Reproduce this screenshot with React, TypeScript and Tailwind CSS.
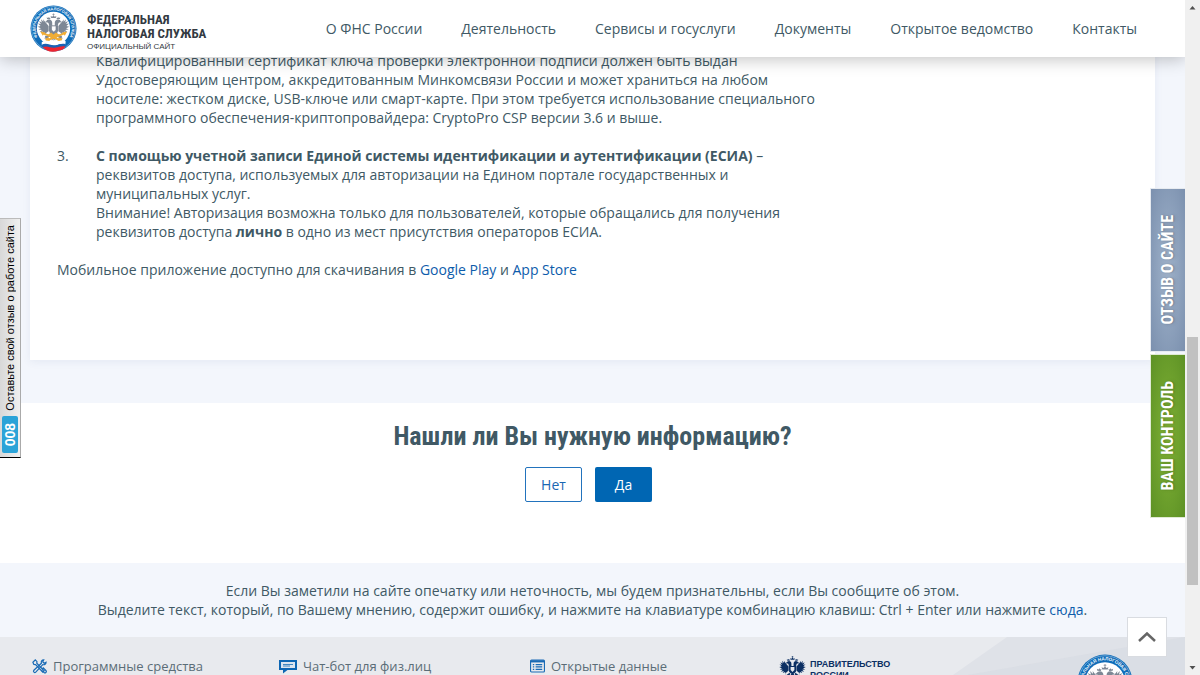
import { useId } from 'react';

const navItems = [
  'О ФНС России',
  'Деятельность',
  'Сервисы и госуслуги',
  'Документы',
  'Открытое ведомство',
  'Контакты',
];

const EagleShape = () => (
  <g>
    {/* crowns */}
    <path d="M50 8v7M46.500 11h7" stroke="currentColor" strokeWidth="2" />
    <path d="M43 22l-2-6 5 2 4-4 4 4 5-2-2 6z" />
    <path d="M30 25l-1-5 4 2 3-3 2 3 3-1-2 5zM70 25l1-5-4 2-3-3-2 3-3-1 2 5z" />
    {/* heads */}
    <path d="M46 46V37c0-7-5-11-11-10-4 0-6 3-7 5l-4 2 5 2c3 0 5 0 6 3l2 8z" />
    <path d="M54 46V37c0-7 5-11 11-10 4 0 6 3 7 5l4 2-5 2c-3 0-5 0-6 3l-2 8z" />
    {/* left wing */}
    <path d="M35 47L22 31l-4-5 1 8-8-8 3 10-9-5 6 10-9-2 8 8-9 2 10 5-8 4 11 1-7 7 11-2-4 7 9-4v7l6-7 6-4z" />
    {/* right wing */}
    <path d="M65 47l13-16 4-5-1 8 8-8-3 10 9-5-6 10 9-2-8 8 9 2-10 5 8 4-11 1 7 7-11-2 4 7-9-4v7l-6-7-6-4z" />
    {/* body, legs and tail */}
    <path d="M36 45h28v15c0 8-6 12-14 16-8-4-14-8-14-16z" />
    <path d="M39 70l-11 8-5-1 2 5-4 3 6 1 3 4 2-6 10-8zM61 70l11 8 5-1-2 5 4 3-6 1-3 4-2-6-10-8z" />
    <path d="M46 73l-7 15 5-2 1 6 4-5 1 7 1-7 4 5 1-6 5 2-7-15z" />
  </g>
);

const Emblem = ({ className }: { className: string }) => {
  const ring = useId();
  return (
    <svg viewBox="0 0 96 96" className={className} aria-hidden="true">
      <circle cx="48" cy="48" r="47" fill="#0f6cb8" />
      <circle cx="48" cy="48" r="45" fill="none" stroke="#a9cbe8" strokeWidth="1" />
      <circle cx="48" cy="48" r="34" fill="#fff" />
      <path id={ring} d="M25 77a37 37 0 1 1 46 0" fill="none" />
      <text fontFamily="Liberation Sans, sans-serif" fontSize="8" fontWeight="700" fill="#eef5fb">
        <textPath href={`#${ring}`} startOffset="50%" textAnchor="middle">
          ФЕДЕРАЛЬНАЯ НАЛОГОВАЯ СЛУЖБА
        </textPath>
      </text>
      <g transform="translate(15 12) scale(.66)" fill="#7e8895" color="#7e8895">
        <EagleShape />
      </g>
      <path d="M44 43h9v8l-4.500 4-4.500-4z" fill="#fff" stroke="#68727f" />
      <path d="M27 58l35 14M70 58L35 72" stroke="#f0ad35" strokeWidth="4" />
      <path
        d="M21 54l10 2-5 7zM76 54l-10 2 5 7zM38 60l5-4 5 4 5-4 6 4-5 7H43zM31 69l7-3 3 6-8 3zM66 69l-7-3-3 6 8 3z"
        fill="#f0ad35"
      />
      <path d="M24 76c10-9 19 2 29-1 7-2 13-4 20-1l-1 7c-7-3-14 0-20 2-10 2-17-6-28-1z" fill="#fff" />
      <path d="M24 81c11-5 18 3 28 1 7-1 13-5 21-2l-1 6c-7-2-14 1-20 2-10 2-17-5-27-1z" fill="#1b62b5" />
      <path d="M26 86c10-4 16 3 26 1 7-1 13-4 20-2-2 5-8 8-13 8-12 5-26 3-33-7z" fill="#ed2530" />
    </svg>
  );
};

const Header = () => (
  <header className="absolute inset-x-0 top-0 z-20 flex h-[57px] items-center justify-between bg-white pl-[30px] pr-12 shadow-[0_2px_16px_rgba(0,0,0,0.25)]">
    <a href="#" className="flex items-center gap-[10px]">
      <Emblem className="size-[47px]" />
      <span className="flex flex-col pt-2 font-['Roboto_Condensed','Liberation_Sans_Narrow','Roboto',sans-serif] text-[#333a42]">
        <span className="text-[13px] leading-[14px] font-bold">ФЕДЕРАЛЬНАЯ</span>
        <span className="text-[13px] leading-[14px] font-bold">НАЛОГОВАЯ СЛУЖБА</span>
        <span className="font-['Liberation_Sans',sans-serif] text-[8px] leading-3">ОФИЦИАЛЬНЫЙ САЙТ</span>
      </span>
    </a>
    <nav className="flex gap-[39px] whitespace-nowrap">
      {navItems.map((item) => (
        <a key={item} href="#" className="text-[14px] leading-5">
          {item}
        </a>
      ))}
    </nav>
  </header>
);

const Article = () => (
  <section className="px-[30px] pb-[43px]">
    <div className="bg-white px-[27px] pt-[51px] pb-[81px] shadow-[0_2px_8px_rgba(60,90,140,0.08)]">
      <ol className="leading-[19px]">
        <li className="flex pb-[19px]">
          <span className="w-[39px] shrink-0" />
          <p>
            Квалифицированный сертификат ключа проверки электронной подписи должен быть выдан
            <br />
            Удостоверяющим центром, аккредитованным Минкомсвязи России и может храниться на любом
            <br />
            носителе: жестком диске, USB-ключе или смарт-карте. При этом требуется использование специального
            <br />
            программного обеспечения-криптопровайдера: CryptoPro CSP версии 3.6 и выше.
          </p>
        </li>
        <li className="flex pb-[19px]">
          <span className="w-[39px] shrink-0">3.</span>
          <p>
            <b>С помощью учетной записи Единой системы идентификации и аутентификации (ЕСИА)</b> –
            <br />
            реквизитов доступа, используемых для авторизации на Едином портале государственных и
            <br />
            муниципальных услуг.
            <br />
            Внимание! Авторизация возможна только для пользователей, которые обращались для получения
            <br />
            реквизитов доступа <b>лично</b> в одно из мест присутствия операторов ЕСИА.
          </p>
        </li>
      </ol>
      <p className="leading-[19px]">
        Мобильное приложение доступно для скачивания в{' '}
        <a href="#" className="text-[#0d5cab]">Google Play</a> и{' '}
        <a href="#" className="text-[#0d5cab]">App Store</a>
      </p>
    </div>
  </section>
);

const Survey = () => (
  <section className="flex flex-col items-center bg-white pt-[17px] pb-[61px]">
    <h2 className="font-['Roboto_Condensed','Liberation_Sans_Narrow','Roboto',sans-serif] text-[26px] leading-8 font-bold">
      Нашли ли Вы нужную информацию?
    </h2>
    <div className="mt-[15px] mr-2 flex gap-[13px]">
      <button className="h-[35px] w-[57px] rounded-xs border border-[#2273bd] text-[#1a67b3]">Нет</button>
      <button className="h-[35px] w-[57px] rounded-xs bg-[#0066b3] text-white">Да</button>
    </div>
  </section>
);

const ToolsIcon = () => (
  <svg viewBox="0 0 16 16" className="size-[15px]" fill="none" stroke="#1a6bb5" strokeWidth="1.300" aria-hidden="true">
    <path d="M1 3.500L3.500 1l1.800 1.800-.2 1.700 7.900 8-1.500 1.500-7.700-8-1.800-.2z" />
    <path d="M12.500 1c-2 0-3 1.500-2.500 3.500L2 12c-1.200 1.500.7 3.200 2 2l7.500-8C13.500 6.500 15 5.500 15 3.500l-2 1-1.500-1.500z" />
    <path d="M10.500 11l1.500-1.500 3 3c1 1.500-1 3-2 2L10 12" />
  </svg>
);

const ChatIcon = () => (
  <svg viewBox="0 0 18 15" className="h-[15px] w-[18px]" aria-hidden="true">
    <path d="M0 1h18v10H8.500L4 14.500V11H0z" fill="#0d66b3" />
    <path d="M2 3h14v6H2z" fill="#dbe5ef" />
    <path d="M4 5.500h10M4 7h7" stroke="#4186c0" strokeWidth="1.200" />
  </svg>
);

const ListIcon = () => (
  <svg viewBox="0 0 16 14" className="h-[14px] w-[15px]" fill="none" stroke="#1a6bb5" aria-hidden="true">
    <rect x=".6" y=".6" width="14.800" height="12.800" rx="1" strokeWidth="1.200" />
    <path d="M1 2h14" strokeWidth="2.400" />
    <path d="M3 5.500h1.500M3 8h1.500M3 10.500h1.500M6 5.500h7M6 8h7M6 10.500h7" strokeWidth="1.300" />
  </svg>
);

const Footer = () => (
  <footer className="relative overflow-hidden bg-[#e8eaee]">
    <svg className="absolute top-0 right-0 h-[120px] w-[246px]" viewBox="0 0 246 120" aria-hidden="true">
      <path d="M68 0h178v120H-60V90z" fill="#dfe2e8" />
      <path d="M246 0v120H-90L0 43z" fill="#d6dae2" opacity=".5" />
    </svg>
    <div className="relative flex h-[120px] items-start pt-[15px] pl-8 text-[13px] text-[#5b6d77]">
      <a href="#" className="flex w-[247px] items-center gap-[6px] pt-1 leading-5 whitespace-nowrap">
        <ToolsIcon />
        Программные средства
      </a>
      <a href="#" className="flex w-[251px] items-center gap-[6px] pt-1 leading-5 whitespace-nowrap">
        <ChatIcon />
        Чат-бот для физ.лиц
      </a>
      <a href="#" className="flex w-[249px] items-center gap-[6px] pt-1 leading-5 whitespace-nowrap">
        <ListIcon />
        Открытые данные
      </a>
      <a href="#" className="flex items-start gap-1 pt-1 text-[#0b2f63]">
        <svg viewBox="0 8 100 100" className="size-[27px]" fill="currentColor" aria-hidden="true">
          <EagleShape />
          <path d="M43 49h14v11l-7 7-7-7z" fill="#e8eaee" />
        </svg>
        <span className="pt-[3px] font-['Liberation_Sans',sans-serif] text-[9px] leading-[11px] font-bold">
          ПРАВИТЕЛЬСТВО
          <br />
          РОССИИ
        </span>
      </a>
      <Emblem className="mt-[2px] mr-[52px] ml-auto size-[56px]" />
    </div>
  </footer>
);

const SideTabs = () => (
  <aside className="absolute top-[188px] right-0 z-10 flex flex-col gap-[2px] font-['Roboto_Condensed','Liberation_Sans_Narrow','Roboto',sans-serif] text-[16px] font-bold text-white">
    <a
      href="#"
      className="flex h-[164px] w-[35px] items-center justify-center border-y border-l border-white/80 bg-radial from-[#a0b3cb] to-[#7b90ae]"
    >
      <span className="rotate-180 [writing-mode:vertical-rl] text-shadow-md">ОТЗЫВ О САЙТЕ</span>
    </a>
    <a
      href="#"
      className="flex h-[164px] w-[35px] items-center justify-center border-y border-l border-white/80 bg-radial from-[#7fb135] to-[#5d9125]"
    >
      <span className="rotate-180 [writing-mode:vertical-rl] text-shadow-md">ВАШ КОНТРОЛЬ</span>
    </a>
  </aside>
);

const FeedbackTab = () => (
  <a
    href="#"
    className="absolute top-[218px] left-0 z-10 flex h-60 w-[21px] flex-col items-center justify-end gap-[5px] border-t border-r border-b border-t-[#bbb] border-r-[#aaa] border-b-black bg-linear-to-r from-[#d8d8d8] to-[#f0f0f0] pb-1 font-['Liberation_Sans',sans-serif] text-black"
  >
    <span className="rotate-180 text-[11px] leading-4 whitespace-nowrap [writing-mode:vertical-rl]">
      Оставьте свой отзыв о работе сайта
    </span>
    <span className="flex h-[37px] w-4 items-center justify-center rounded-xs bg-[#2ba3d8]">
      <span className="rotate-180 text-[14px] leading-4 font-bold text-white [writing-mode:vertical-rl]">008</span>
    </span>
  </a>
);

const Scrollbar = () => (
  <div className="flex w-[15px] shrink-0 flex-col items-center justify-between bg-[#f0f0f0]" aria-hidden="true">
    <svg viewBox="0 0 15 15" className="size-[15px]" fill="#505050">
      <path d="M4.500 9.500h6l-3-3.500z" />
    </svg>
    <div className="flex w-full flex-1 flex-col items-center">
      <div className="grow-[322]" />
      <div className="w-[11px] grow-[248] bg-[#c1c1c1]" />
      <div className="grow-[75]" />
    </div>
    <svg viewBox="0 0 15 15" className="size-[15px]" fill="#505050">
      <path d="M4.500 6h6l-3 3.500z" />
    </svg>
  </div>
);

const App = () => {
  return (
    <div className="flex h-screen overflow-hidden bg-[#f3f6fc] font-['Open_Sans',sans-serif] text-[14px] text-[#405965]">
      <div className="relative min-w-0 flex-1 overflow-hidden">
        <Header />
        <main>
          <Article />
          <Survey />
          <p className="pt-[18px] pb-[18px] text-center leading-[19px]">
            Если Вы заметили на сайте опечатку или неточность, мы будем признательны, если Вы сообщите об этом.
            <br />
            Выделите текст, который, по Вашему мнению, содержит ошибку, и нажмите на клавиатуре комбинацию клавиш:
            Ctrl + Enter или нажмите <a href="#" className="text-[#0d5cab]">сюда</a>.
          </p>
        </main>
        <Footer />
        <FeedbackTab />
        <SideTabs />
        <button
          aria-label="Наверх"
          className="absolute right-[18px] bottom-[18px] z-10 flex size-10 items-center justify-center border border-[#d9dce1] bg-white"
        >
          <svg viewBox="0 0 18 10" className="h-[10px] w-[18px]" fill="none" stroke="#666" strokeWidth="2.500" aria-hidden="true">
            <path d="M1 9l8-7.500L17 9" />
          </svg>
        </button>
      </div>
      <Scrollbar />
    </div>
  );
};

export default App;
